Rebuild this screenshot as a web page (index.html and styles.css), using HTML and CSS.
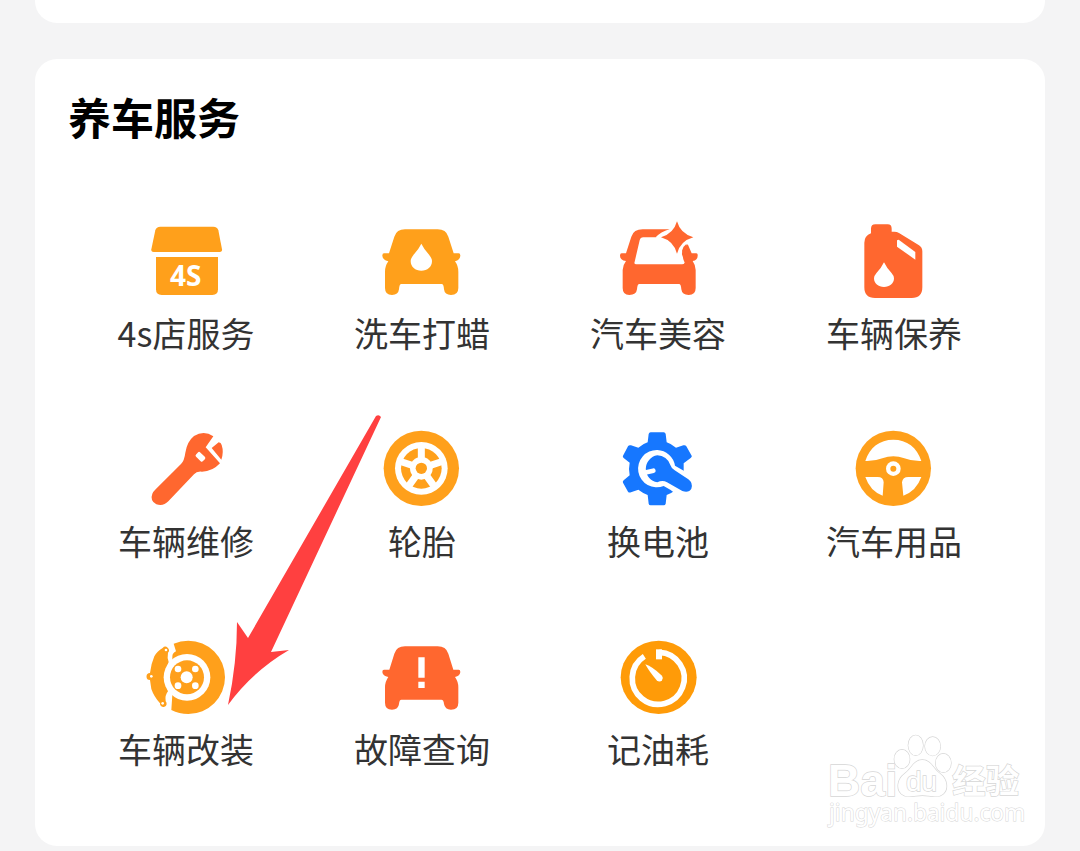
FILE: index.html
```html
<!DOCTYPE html>
<html lang="zh-CN">
<head>
<meta charset="utf-8">
<meta name="viewport" content="width=device-width, initial-scale=1">
<title>养车服务</title>
<link rel="stylesheet" href="styles.css">
</head>
<body>
<main class="page">
  <div class="card card-previous"></div>
  <section class="card services" aria-labelledby="services-title">
    <h2 class="services-title" id="services-title">养车服务</h2>
    <nav class="service-grid">
      <a class="service" href="#shop">
        <svg class="icon amber" viewBox="108 33 240 240" aria-hidden="true">
          <path d="M151 50H310Q322 50 325 61L336 118Q337 126 329 126H131Q123 126 124 118L136 61Q139 50 151 50Z"/>
          <path d="M138 141H324V238Q324 255 307 255H155Q138 255 138 238Z"/>
          <text class="icon-text" x="227" y="229" text-anchor="middle">4S</text>
        </svg>
        <span class="label">4s店服务</span>
      </a>
      <a class="service" href="#wash">
        <svg class="icon amber" viewBox="111 33 240 240" aria-hidden="true">
          <path d="M180 58H278Q303 58 310 80L326 130H341Q346 130 346 137Q345 150 330 154Q340 168 340 185V234Q340 255 318 255Q299 255 297 238Q296 222 290 222H169Q163 222 162 238Q160 255 141 255Q120 255 120 234V185Q120 168 130 154Q113 150 112 137Q112 130 117 130H132L148 80Q155 58 180 58Z"/>
          <path class="cut" d="M229 101Q238 119 251 133Q261 145 261 153C261 171 247 182 229 182S197 171 197 153Q197 145 207 133Q220 119 229 101Z"/>
        </svg>
        <span class="label">洗车打蜡</span>
      </a>
      <a class="service" href="#beauty">
        <svg class="icon coral" viewBox="114 33 240 240" aria-hidden="true">
          <path d="M188 58H290L322 100L335 130H349Q354 130 353 137Q353 150 338 153Q347 166 347 180V234Q347 255 326 255Q306 255 304 238Q303 222 297 222H178Q172 222 171 238Q169 255 148 255Q128 255 128 234V180Q128 166 138 153Q120 150 120 137Q120 130 125 130H138L154 80Q161 58 188 58Z"/>
          <path class="cut" d="M190 82H290L314 158Q312 163 306 163H169Q161 163 164 155L179 91Q181 82 190 82Z"/>
          <path class="cut" d="M227 82Q242 66 268 58L291 20L360 80L325 101Q307 115 303 142L276 140Q270 111 247 96Z"/>
          <path d="M291 34Q301 71 340 82Q301 93 291 131Q281 93 243 82Q281 71 291 34Z"/>
          <path d="M319 102L334 154H312L306 122Q310 108 319 102Z"/>
        </svg>
        <span class="label">汽车美容</span>
      </a>
      <a class="service" href="#maintenance">
        <svg class="icon coral" viewBox="117 33 240 240" aria-hidden="true">
          <path d="M181 43H218Q230 43 230 56V65H238Q246 65 252 69L312 106Q322 112 322 124V232Q322 264 290 264H180Q148 264 148 232V98Q148 78 168 70V56Q168 43 181 43Z"/>
          <path class="cut" d="M251 89L301 126V149L246 110V91Z"/>
          <path class="cut" d="M207 157Q215 174 229 188Q237 197 237 205C237 221 224 231 207 231S177 221 177 205Q177 197 185 188Q199 174 207 157Z"/>
        </svg>
        <span class="label">车辆保养</span>
      </a>
      <a class="service" href="#repair">
        <svg class="icon coral" viewBox="108 27 240 240" aria-hidden="true">
          <path d="M310 49L287 82L330 130Q307 155 276 155Q260 153 252 163L175 244Q160 260 139 253Q119 242 127 221Q129 216 137 208L213 132Q223 122 226 98Q231 65 252 48Q282 30 310 49Z"/>
          <path d="M305 84L326 67Q333 67 335 75Q342 96 334 119Z"/>
          <rect class="cut" x="257" y="101" width="29" height="18" rx="5" transform="rotate(44 271 110)"/>
        </svg>
        <span class="label">车辆维修</span>
      </a>
      <a class="service" href="#tyre">
        <svg class="icon amber" viewBox="111 27 240 240" aria-hidden="true">
          <circle cx="229" cy="145" r="113"/>
          <circle class="cut" cx="229" cy="145" r="79"/>
          <circle cx="229" cy="145" r="61"/>
          <path class="cut-line" stroke-width="21" d="M229 145V75M229 145L296 123M229 145L270 202M229 145L188 202M229 145L162 123"/>
          <circle class="cut" cx="229" cy="145" r="34"/>
          <circle cx="229" cy="145" r="17"/>
        </svg>
        <span class="label">轮胎</span>
      </a>
      <a class="service" href="#battery">
        <svg class="icon blue" viewBox="114 27 240 240" aria-hidden="true">
          <path d="M212 37H251Q256 37 257 42L260 67Q275 72 288 83L310 76Q316 74 319 79L335 107Q337 110 332 114L311 130V165L332 181Q337 185 335 188L319 215Q316 219 310 217L288 209Q275 219 260 225L257 251Q256 256 251 256H212Q207 256 206 251L203 225Q188 219 175 209L153 217Q147 219 144 215L129 188Q127 185 131 181L149 166Q145 147 149 128L131 114Q127 110 129 107L144 79Q147 74 153 76L175 83Q188 72 203 67L206 42Q207 37 212 37Z"/>
          <path class="cut" d="M232 90A56 56 0 0 1 285 137L314 154L350 160L350 235L300 232L272 210L251 198A56 56 0 1 1 232 90Z"/>
          <path d="M232 106A41 41 0 0 1 271 135Q274 145 284 151L325 178Q340 189 334 206Q327 219 307 213L261 187Q248 179 232 187A41 41 0 0 1 232 106Z"/>
          <path class="cut-line" stroke-width="14" stroke-linecap="round" d="M186 160L220 152"/>
        </svg>
        <span class="label">换电池</span>
      </a>
      <a class="service" href="#accessories">
        <svg class="icon amber" viewBox="117 27 240 240" aria-hidden="true">
          <circle cx="235" cy="145" r="113"/>
          <path class="cut" d="M151 123C164 82 194 59 235 59S306 82 319 123Q290 124 268 115Q235 102 202 115Q180 124 151 123Z"/>
          <path class="cut" d="M151 171H188Q205 171 206 187L203 227Q165 213 151 171ZM319 171H280Q263 171 261 187L265 227Q304 213 319 171Z"/>
          <circle class="cut" cx="235" cy="146" r="22"/>
          <circle cx="235" cy="146" r="9"/>
        </svg>
        <span class="label">汽车用品</span>
      </a>
      <a class="service" href="#modification">
        <svg class="icon amber" viewBox="108 51 240 240" aria-hidden="true">
          <path d="M191 71Q211 62 235 62A110 110 0 0 1 235 282Q207 282 184 270L187 224V110Q187 99 198 94Z"/>
          <path d="M158 84A10 10 0 1 1 174 98Q171 113 176 126Q158 170 174 214Q164 226 167 244A10 10 0 1 1 150 250Q132 230 124 207L120 180A10 10 0 1 1 120 159Q123 132 133 109Q141 94 158 84Z"/>
          <circle class="cut" cx="231" cy="172" r="70"/>
          <circle cx="231" cy="172" r="51"/>
          <circle class="cut" cx="230" cy="172" r="18"/>
          <circle class="cut" cx="204" cy="147" r="10"/>
          <circle class="cut" cx="256" cy="147" r="10"/>
          <circle class="cut" cx="204" cy="197" r="10"/>
          <circle class="cut" cx="256" cy="197" r="10"/>
          <circle class="cut" cx="168" cy="90" r="4"/>
          <circle class="cut" cx="124" cy="169" r="4"/>
          <circle class="cut" cx="158" cy="250" r="4"/>
        </svg>
        <span class="label">车辆改装</span>
      </a>
      <a class="service" href="#fault">
        <svg class="icon coral" viewBox="111 21 240 240" aria-hidden="true">
          <path d="M180 49H278Q303 49 310 71L325 119H341Q346 119 346 126Q345 138 330 141Q340 155 340 172V218Q340 239 318 239Q300 239 297 222Q296 209 289 209H169Q163 209 162 222Q160 239 141 239Q120 239 120 218V172Q120 155 130 141Q113 138 112 126Q112 119 117 119H133L148 71Q155 49 180 49Z"/>
          <path class="cut" d="M220 82H239V143H220ZM220 155H239V174H220Z"/>
        </svg>
        <span class="label">故障查询</span>
      </a>
      <a class="service" href="#fuel">
        <svg class="icon orange" viewBox="114 21 240 240" aria-hidden="true">
          <ellipse cx="236" cy="142" rx="114" ry="110"/>
          <path class="cut-line" stroke-width="17" d="M193 79A78 78 0 1 0 238 67"/>
          <path class="cut" d="M228 58H246V88H228Z"/>
          <path class="cut" d="M196 103Q217 110 246 137Q251 144 246 151Q239 158 230 151Q207 124 196 103Z"/>
        </svg>
        <span class="label">记油耗</span>
      </a>
    </nav>

    <svg class="pointer" viewBox="0 0 64 290" aria-hidden="true">
      <path d="M149 1Q152 -1 154 2L44 237L62 235Q26 256 1 290Q10 248 10 207L21 223Z"/>
    </svg>

    <svg class="watermark" viewBox="45 40 600 294" role="img" aria-label="Baidu 经验">
      <text class="brand" x="54" y="228">Bai</text>
      <ellipse cx="276" cy="118" rx="23" ry="28"/>
      <ellipse cx="317" cy="77" rx="22" ry="30"/>
      <ellipse cx="368" cy="80" rx="23" ry="28"/>
      <ellipse cx="400" cy="130" rx="23" ry="28"/>
      <path d="M337 121C364 121 369 148 391 163C411 178 416 207 400 222C383 237 360 227 337 227S291 237 274 222C258 207 263 178 283 163C305 148 310 121 337 121Z"/>
      <text class="brand-small" x="288" y="213">du</text>
      <text class="brand-cjk" x="427" y="220">经验</text>
      <text class="site" x="57" y="303">jingyan.baidu.com</text>
    </svg>
  </section>
</main>
</body>
</html>
```
FILE: styles.css
```css
* {
  box-sizing: border-box;
}

body {
  margin: 0;
  background: #f4f4f5;
  color: #333;
  font-family: "Noto Sans CJK SC", "Noto Sans", sans-serif;
}

.page {
  display: flex;
  flex-direction: column;
  gap: 36px;
  padding: 0 35px 5px;
}

.card {
  background: #fff;
  border-radius: 22px;
}

.card-previous {
  height: 23px;
  border-top-left-radius: 0;
  border-top-right-radius: 0;
}

.services {
  position: relative;
  padding: 33px 33px 77px;
}

.services-title {
  margin: 0 0 81px;
  color: #000;
  font-size: 43px;
  font-weight: 700;
  line-height: 48px;
}

.service-grid {
  display: grid;
  grid-template-columns: repeat(4, 1fr);
  row-gap: 76px;
}

.service {
  display: flex;
  flex-direction: column;
  align-items: center;
  gap: 12px;
  color: inherit;
  text-decoration: none;
}

.icon {
  width: 80px;
  height: 80px;
}

.label {
  font-size: 34px;
  line-height: 40px;
  white-space: nowrap;
}

.amber {
  fill: #ffa01b;
}

.orange {
  fill: #ff9b08;
}

.coral {
  fill: #ff672f;
}

.blue {
  fill: #1677ff;
}

.cut {
  fill: #fff;
}

.cut-line {
  fill: none;
  stroke: #fff;
}

.icon-text {
  fill: #fff;
  font-family: "Noto Sans", sans-serif;
  font-size: 84px;
  font-weight: 700;
}

.pointer {
  position: absolute;
  top: 356px;
  left: 192px;
  width: 64px;
  height: 290px;
  overflow: visible;
  fill: #ff4040;
  pointer-events: none;
}

.watermark {
  position: absolute;
  right: 20px;
  bottom: 15px;
  width: 200px;
  height: 98px;
  fill: #fff;
  stroke: #d6d6d6;
  stroke-width: 4px;
  paint-order: stroke;
}

.brand,
.brand-small {
  font-family: "Liberation Sans", Arial, sans-serif;
}

.brand {
  font-size: 134px;
  font-weight: 700;
}

.brand-small {
  font-size: 84px;
}

.brand-cjk {
  font-size: 100px;
  font-weight: 700;
}

.site {
  font-family: "Noto Sans", sans-serif;
  font-size: 68px;
  stroke-width: 3px;
}
```
